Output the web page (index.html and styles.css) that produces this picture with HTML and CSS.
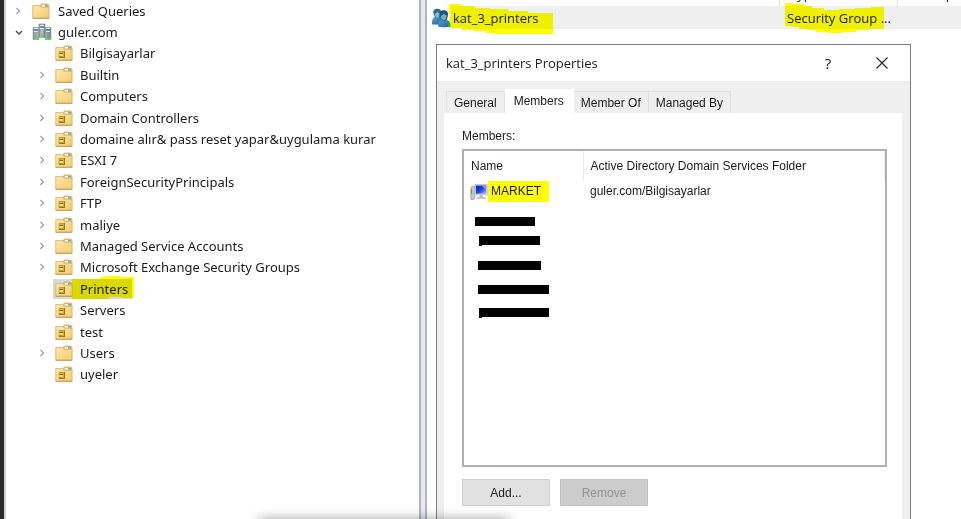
FILE: index.html
```html
<!DOCTYPE html>
<html lang="en">
<head>
<meta charset="utf-8">
<title>Active Directory Users and Computers</title>
<link rel="stylesheet" href="styles.css">
</head>
<body>
<svg class="defs" aria-hidden="true">
  <defs>
    <linearGradient id="paper" x1="0" y1="0" x2="1" y2="1"><stop offset="0" stop-color="#ffe9ac"/><stop offset="1" stop-color="#f3cb6c"/></linearGradient>
    <linearGradient id="tower" x1="0" y1="0" x2="1" y2="0"><stop offset="0" stop-color="#8a979f"/><stop offset=".5" stop-color="#b9c5cc"/><stop offset="1" stop-color="#76858e"/></linearGradient>
    <linearGradient id="screen" x1="0" y1="0" x2="1" y2="1"><stop offset="0" stop-color="#0a1cb8"/><stop offset=".5" stop-color="#2140d8"/><stop offset="1" stop-color="#a9b9ff"/></linearGradient>
    <linearGradient id="shirt" x1="0" y1="0" x2="1" y2="1"><stop offset="0" stop-color="#5da0d0"/><stop offset="1" stop-color="#1d5f98"/></linearGradient>
    <symbol id="folder" viewBox="0 0 18 16">
      <path d="M8 3.5 9.2 1h6.6l1 1v4H8z" fill="#e9c372" stroke="#c9a45c" stroke-width=".7"/>
      <path d="M10 2h5v1.6h-5z" fill="#fff"/><path d="M13 2h2.6v1.6H13z" fill="#58a5dd"/>
      <path d="M.8 2.6h7l1.4 1.6h7.9v11H.8z" fill="url(#paper)" stroke="#d5ae62" stroke-width=".8"/>
      <path d="M.6 15.3h16.6" stroke="#b99450" stroke-width=".8"/>
    </symbol>
    <symbol id="unit" viewBox="0 0 18 16">
      <use href="#folder" width="18" height="16"/>
      <path d="M3.500 6H10v7H3.500z" fill="#cfae3c"/>
      <path d="M4 6.500h5.500" stroke="#bfa03a"/><path d="M9.500 6v7M4 12.500h6" stroke="#94791d"/>
      <path d="M4.500 8.500H8" stroke="#8a7119"/><path d="M4.500 9.500H8M4.500 10.500H8" stroke="#f3dc80"/><path d="M4.500 11.500H8" stroke="#b2952f"/>
    </symbol>
    <symbol id="domain" viewBox="0 0 20 19">
      <path d="M1 4.500h6v12H1zM13 4.500h6v12h-6z" fill="url(#tower)" stroke="#8795a0" stroke-width=".6"/>
      <path d="M2 5.500h4M2 8.500h4M14 5.500h4M14 8.500h4" stroke="#e2edf2"/>
      <path d="M2 7h4M14 7h4" stroke="#4b6878"/>
      <path d="M7 1h6v13.500H7z" fill="url(#tower)" stroke="#71808a" stroke-width=".6"/>
      <path d="M8 2.500h4M8 5.500h4" stroke="#e2edf2"/><path d="M8 4h4" stroke="#4b6878"/>
      <path d="M7 14.800h6v2.700H7z" fill="#eef2f4"/>
      <path d="M9.500 11.500h2.500v2.500H9.500zM4.500 14.500h2.500v2.500H4.500zM16.500 14.500H19v2.500h-2.500z" fill="#58db2b"/>
    </symbol>
    <symbol id="group" viewBox="0 0 20 20">
      <path d="M1 16c0-5 1-7 4-7h4l3 5v2.500H1z" fill="url(#shirt)"/>
      <path d="M2.200 5C2 2 4 .8 6.300.8S10.500 2 10.200 5L9 9.500H4z" fill="#286b8f"/>
      <path d="M3.600 5.500c1.400-.3 2.300-1 2.800-2 .5 1 1.100 1.400 2.300 1.700 0 2.800-1 4.500-2.400 4.500S3.800 8 3.600 5.500z" fill="#88b7c7"/>
      <path d="M7 18.500c0-4.500 1.500-6.500 4-6.500h4c3 0 4.300 2 4.300 6.500-3 1-9 1-12.300 0z" fill="url(#shirt)"/>
      <path d="M8.500 7c-.2-3.500 2-4.800 4.400-4.800S17.200 3.600 17 7l-1 4.500-3 1.800-3-1.800z" fill="#1e5678"/>
      <path d="M10 7.500c1.500-.3 2.400-1 3-2 .5 1 1 1.500 2.500 1.800 0 3-1.100 5-2.700 5S10.200 10.500 10 7.500z" fill="#7eaec2"/>
      <path d="M17 13.500c1.700.7 2.400 2 2.400 5H17z" fill="#25a93b"/>
    </symbol>
    <symbol id="computer" viewBox="0 0 19 18">
      <path d="M.8 4.800 2 3h3.200v13l-1 .8H.8z" fill="#c5cac8" stroke="#8b918f" stroke-width=".6"/>
      <path d="M1.700 6v5" stroke="#39ad45" stroke-width="1.200"/>
      <path d="M5 1h13.300v11H5z" fill="#d9dde8" stroke="#a4a9b5" stroke-width=".6"/>
      <path d="M6.200 2.200H17v8.600H6.200z" fill="url(#screen)"/><path d="M12 2.200h5v4.600z" fill="#7c92f4"/>
      <path d="M10 12.200h3.600v2.300H16l1 1.700H7l1-1.700h2z" fill="#b7bcbf"/>
    </symbol>
    <symbol id="right" viewBox="0 0 8 10"><path d="M1.500 2 4.500 5l-3 3" fill="none" stroke="#999" stroke-width="1.100"/></symbol>
    <symbol id="down" viewBox="0 0 8 10"><path d="m1 4 3 3 3-3" fill="none" stroke="#444" stroke-width="1.300"/></symbol>
  </defs>
</svg>

<main class="console">
  <nav class="tree-pane" aria-label="Console tree">
    <ul class="tree">
      <li class="node root"><button class="toggle" aria-label="Expand"><svg><use href="#right"/></svg></button><svg class="icon"><use href="#folder"/></svg><span>Saved Queries</span></li>
      <li class="node root"><button class="toggle" aria-label="Collapse"><svg><use href="#down"/></svg></button><svg class="icon wide"><use href="#domain"/></svg><span>guler.com</span></li>
      <li class="node"><i class="toggle"></i><svg class="icon"><use href="#unit"/></svg><span>Bilgisayarlar</span></li>
      <li class="node"><button class="toggle" aria-label="Expand"><svg><use href="#right"/></svg></button><svg class="icon"><use href="#folder"/></svg><span>Builtin</span></li>
      <li class="node"><button class="toggle" aria-label="Expand"><svg><use href="#right"/></svg></button><svg class="icon"><use href="#folder"/></svg><span>Computers</span></li>
      <li class="node"><button class="toggle" aria-label="Expand"><svg><use href="#right"/></svg></button><svg class="icon"><use href="#unit"/></svg><span>Domain Controllers</span></li>
      <li class="node"><button class="toggle" aria-label="Expand"><svg><use href="#right"/></svg></button><svg class="icon"><use href="#unit"/></svg><span>domaine alır&amp; pass reset yapar&amp;uygulama kurar</span></li>
      <li class="node"><button class="toggle" aria-label="Expand"><svg><use href="#right"/></svg></button><svg class="icon"><use href="#unit"/></svg><span>ESXI 7</span></li>
      <li class="node"><button class="toggle" aria-label="Expand"><svg><use href="#right"/></svg></button><svg class="icon"><use href="#folder"/></svg><span>ForeignSecurityPrincipals</span></li>
      <li class="node"><button class="toggle" aria-label="Expand"><svg><use href="#right"/></svg></button><svg class="icon"><use href="#unit"/></svg><span>FTP</span></li>
      <li class="node"><button class="toggle" aria-label="Expand"><svg><use href="#right"/></svg></button><svg class="icon"><use href="#unit"/></svg><span>maliye</span></li>
      <li class="node"><button class="toggle" aria-label="Expand"><svg><use href="#right"/></svg></button><svg class="icon"><use href="#folder"/></svg><span>Managed Service Accounts</span></li>
      <li class="node"><button class="toggle" aria-label="Expand"><svg><use href="#right"/></svg></button><svg class="icon"><use href="#unit"/></svg><span>Microsoft Exchange Security Groups</span></li>
      <li class="node"><i class="toggle"></i><span class="selected"><svg class="icon"><use href="#unit"/></svg><span>Printers</span><svg class="marker mark-tree" viewBox="0 0 62 24"><path d="M0 3h28V1h5V0h16v1h13v21H51v-1H37v2H0z"/></svg></span></li>
      <li class="node"><i class="toggle"></i><svg class="icon"><use href="#unit"/></svg><span>Servers</span></li>
      <li class="node"><i class="toggle"></i><svg class="icon"><use href="#unit"/></svg><span>test</span></li>
      <li class="node"><button class="toggle" aria-label="Expand"><svg><use href="#right"/></svg></button><svg class="icon"><use href="#folder"/></svg><span>Users</span></li>
      <li class="node"><i class="toggle"></i><svg class="icon"><use href="#unit"/></svg><span>uyeler</span></li>
    </ul>
  </nav>
  <div class="splitter"></div>

  <section class="details">
    <div class="columns"><span></span><span>Type</span><span>Description</span></div>
    <div class="object">
      <div class="object-name"><svg class="group-icon"><use href="#group"/></svg><span>kat_3_printers</span><svg class="marker mark-name" viewBox="0 0 104 30"><path d="M0 0h12v2h14v2h15v1h18v2h20v2h25v21H46v-1h-9v-2H25v-1H13v-2H1V9H0z"/></svg></div>
      <div class="object-type">Security Group ...<svg class="marker mark-type" viewBox="0 0 99 30"><path d="M0 0h8v1h11v2h8v2h12v2h15V6h16V5h16V4h13v22H84v1H71v2H58v1H42v-1H31v-2H22v-1h-8v-2H6v-1H0z"/></svg></div>
    </div>

    <section class="dialog" role="dialog" aria-labelledby="dialog-title">
      <header class="titlebar">
        <h1 id="dialog-title">kat_3_printers Properties</h1>
        <button class="caption" aria-label="Help">?</button>
        <button class="caption" aria-label="Close"><svg viewBox="0 0 12 12"><path d="m.5.5 11 11m0-11-11 11" stroke="#222" stroke-width="1.100"/></svg></button>
      </header>
      <div class="dialog-body">
        <div class="tabs" role="tablist">
          <button class="tab" role="tab">General</button>
          <button class="tab active" role="tab" aria-selected="true">Members</button>
          <button class="tab" role="tab">Member Of</button>
          <button class="tab" role="tab">Managed By</button>
        </div>
        <div class="page" role="tabpanel">
          <h2 id="members-label">Members:</h2>
          <div class="listbox">
            <table aria-labelledby="members-label">
              <thead><tr><th class="name-col">Name</th><th>Active Directory Domain Services Folder</th></tr></thead>
              <tbody><tr><td class="member"><svg class="computer-icon"><use href="#computer"/></svg><span class="marked">MARKET</span></td><td>guler.com/Bilgisayarlar</td></tr></tbody>
            </table>
            <svg class="redactions" viewBox="0 0 80 104"><path d="M2 1h60v9H2zM6 20h61v9H9v1H6zM5 45h63v9H5zM5 69h71v9H5zM6 92h70v9H9v1H6z"/></svg>
          </div>
          <div class="actions"><button class="push">Add...</button><button class="push" disabled>Remove</button></div>
        </div>
      </div>
    </section>
  </section>
</main>
<div class="edge-shadow"></div>
</body>
</html>
```
FILE: styles.css
```css
* { box-sizing: border-box; }

body {
  margin: 0;
  height: 100vh;
  overflow: hidden;
  background: #fff;
  color: #1a1a1a;
  font: 13px/18px "Open Sans", "Noto Sans", sans-serif;
}

button {
  margin: 0;
  padding: 0;
  border: 0;
  background: none;
  color: inherit;
  font: inherit;
}

svg { display: block; flex: none; }
.defs { position: absolute; width: 0; height: 0; }

.console { display: flex; height: 100%; }

.tree-pane {
  flex: 0 0 419px;
  border-left: 4px solid #2a2a2a;
  box-shadow: inset 2px 0 #d0d1d4;
  font-family: "Noto Sans", "Open Sans", sans-serif;
}
.tree {
  display: grid;
  grid-auto-rows: 1fr;
  height: 385px;
  margin: 0;
  padding: 0;
  list-style: none;
}
.node {
  display: flex;
  align-items: center;
  padding-left: 33px;
  white-space: nowrap;
}
.node.root { padding-left: 10px; }
.toggle { flex: none; width: 18px; height: 10px; }
.toggle svg { width: 8px; height: 10px; margin-left: 2px; }
.root .toggle svg { margin-left: 1px; }
.icon { width: 18px; height: 16px; margin-right: 7px; }
.root .icon { margin-left: 0; margin-right: 8px; }
.root .wide { width: 20px; height: 19px; margin-right: 6px; }
.selected {
  position: relative;
  display: flex;
  align-items: center;
  margin-left: -2px;
  padding: 1px 4px 1px 2px;
  background: #d9d9d9;
}

.marker {
  position: absolute;
  fill: #ff0;
  mix-blend-mode: multiply;
  pointer-events: none;
}
.mark-tree { left: 19px; top: -3px; width: 62px; height: 24px; }

.splitter {
  flex: 0 0 8px;
  border-left: 2px solid #b4b6bd;
  border-right: 2px solid #b4b6bd;
  background: #e9eaee;
}

.details {
  flex: 1;
  display: flex;
  flex-direction: column;
  min-width: 0;
}
.columns, .object {
  display: grid;
  grid-template-columns: 353px 118px 1fr;
}
.columns {
  grid-template-rows: 6px;
  height: 6px;
  overflow: hidden;
  align-items: end;
}
.columns span {
  height: 21px;
  padding-left: 10px;
  border-right: 1px solid #e5e5e5;
}
.columns span:last-child { border: 0; }
.object {
  height: 23px;
  align-items: center;
  background: linear-gradient(to right, #fff 24px, #efefef 24px);
}
.object-name {
  position: relative;
  display: flex;
  align-items: center;
  gap: 2px;
  padding-left: 4px;
}
.group-icon { width: 20px; height: 20px; }
.object-type { position: relative; padding-left: 7px; }
.mark-name { left: 22px; top: -4px; width: 104px; height: 30px; }
.mark-type { left: 5px; top: -6px; width: 99px; height: 30px; }

.dialog {
  flex: 1;
  display: flex;
  flex-direction: column;
  margin: 15px 50px 0 9px;
  border: 1px solid #7b7d80;
  border-bottom: 0;
  background: #efefef;
}
.titlebar {
  display: flex;
  align-items: center;
  height: 36px;
  padding: 0 1px 0 9px;
  background: #fff;
}
.titlebar h1 { flex: 1; margin: 0; font-size: 13px; font-weight: 400; }
.caption { width: 54px; height: 36px; font-size: 15px; }
.caption svg { width: 12px; height: 12px; margin: 0 auto; }

.dialog-body {
  flex: 1;
  display: flex;
  flex-direction: column;
  padding: 8px 8px 0 7px;
  font: 12px/16px "Liberation Sans", Arial, sans-serif;
}
.tabs { display: flex; align-items: flex-end; height: 24px; padding-left: 2px; }
.tab {
  height: 22px;
  padding: 0 7px;
  border: 1px solid #e2e2e2;
  border-bottom: 0;
  border-left: 0;
}
.tab:first-child { border-left: 1px solid #e2e2e2; }
.tab.active { height: 24px; padding: 0 9px 2px; border-color: #fff; background: #fff; }
.page { flex: 1; padding: 15px 15px 0 18px; background: #fff; }
.page h2 { margin: 0; font-size: 12px; font-weight: 400; }

.listbox {
  position: relative;
  height: 318px;
  margin-top: 5px;
  border: 2px solid #adb0b6;
}
.listbox table { width: 100%; border-collapse: collapse; table-layout: fixed; }
.listbox th {
  height: 29px;
  padding: 0 7px;
  border-right: 1px solid #e8e8e8;
  font-weight: 400;
  text-align: left;
}
.listbox .name-col { width: 119px; }
.listbox td { padding: 0 7px; }
.listbox .member { display: flex; align-items: center; padding: 1px 0 0 6px; }
.computer-icon { width: 18px; height: 18px; }
.marked { padding: 2px 8px 3px 3px; background: #ff0; }
.redactions { position: absolute; left: 9px; top: 65px; width: 80px; height: 104px; }

.actions { display: flex; gap: 10px; margin-top: 12px; }
.push {
  width: 88px;
  height: 27px;
  border: 1px solid #cfcfcf;
  background: #e1e1e1;
}
.push:disabled { border-color: #c3c3c3; background: #ccc; color: #929292; }

.edge-shadow {
  position: absolute;
  left: 27%;
  right: 47%;
  top: 100%;
  height: 10px;
  box-shadow: 0 0 12px rgba(0, 0, 0, .4);
}
```
